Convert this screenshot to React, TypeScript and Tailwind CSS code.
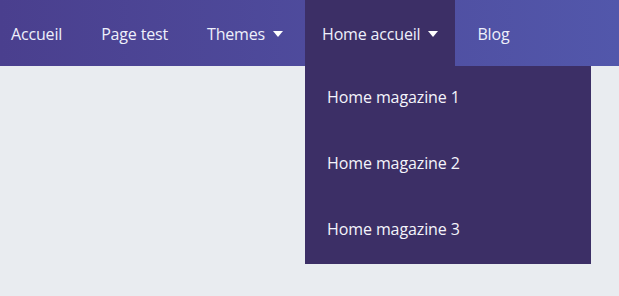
const font = { fontFamily: '"Segoe UI", "Open Sans", "Noto Sans", sans-serif' }

function Caret() {
  return <span className="ml-[8px] inline-block w-0 h-0 border-x-[5px] border-x-transparent border-t-[6px] border-t-white" />
}

export default function App() {
  const items = [
    { label: 'Accueil' },
    { label: 'Page test' },
    { label: 'Themes', caret: true },
    { label: 'Home accueil', caret: true, open: true },
    { label: 'Blog' },
  ]

  return (
    <div className="w-[619px] h-[296px] bg-[#e9ecf0] text-[16px]" style={font}>
      <nav className="h-[66px] bg-gradient-to-r from-[#4a3f8e] to-[#5257ab]">
        <ul className="flex h-full gap-[5px]">
          {items.map((item, i) => (
            <li key={item.label} className="relative h-full">
              <a
                className={`flex h-full items-center pt-[2px] pr-[17px] text-[#eef0fb] tracking-[-0.17px] ${i === 0 ? 'pl-[11px]' : 'pl-[17px]'} ${item.open ? 'bg-[#3c2f66]' : ''}`}
              >
                {item.label}
                {item.caret && <Caret />}
              </a>

              {/* Open dropdown */}
              {item.open && (
                <div className="absolute left-0 top-[66px] w-[286px] bg-[#3c2f66] z-10">
                  {['Home magazine 1', 'Home magazine 2', 'Home magazine 3'].map((sub) => (
                    <div key={sub} className="h-[66px] flex items-center pb-[4px] pl-[22px] text-[#f4f4fb] tracking-[-0.1px]">
                      {sub}
                    </div>
                  ))}
                </div>
              )}
            </li>
          ))}
        </ul>
      </nav>
    </div>
  )
}
